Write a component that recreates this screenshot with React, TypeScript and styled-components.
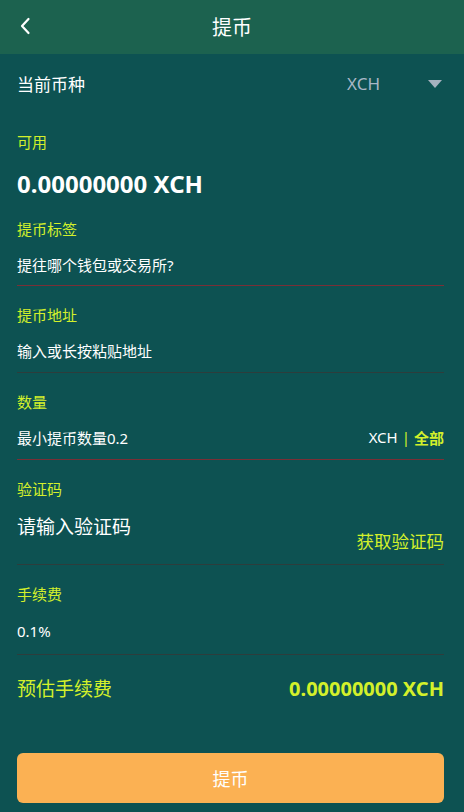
import React from "react";
import styled, { createGlobalStyle } from "styled-components";

const GlobalStyle = createGlobalStyle`
  html, body {
    margin: 0;
    padding: 0;
    background: #0d5252;
  }
  * {
    box-sizing: border-box;
  }
  body {
    font-family: "Noto Sans", "Noto Sans CJK SC", sans-serif;
  }
`;

const Page = styled.div`
  width: 100%;
  min-height: 812px;
  background: #0d5252;
  color: #ffffff;
`;

const Header = styled.header`
  position: relative;
  height: 54px;
  background: #1c624f;
  display: flex;
  align-items: center;
  justify-content: center;
`;

const BackButton = styled.button`
  position: absolute;
  left: 12px;
  top: 12px;
  width: 26px;
  height: 28px;
  padding: 0;
  border: none;
  background: none;
  display: flex;
  align-items: center;
  justify-content: center;
`;

const Title = styled.h1`
  margin: 0 0 2px;
  font-size: 20px;
  font-weight: 400;
  color: #ffffff;
`;

const Body = styled.main`
  padding: 0 20px 0 17px;
`;

const CoinRow = styled.div`
  height: 59px;
  display: flex;
  align-items: center;
  justify-content: space-between;
  font-size: 17px;
`;

const CoinPicker = styled.div`
  display: flex;
  align-items: center;
  gap: 48px;
  color: #a9b7c6;
  font-size: 17px;
`;

const Triangle = styled.span`
  width: 0;
  height: 0;
  border-left: 7px solid transparent;
  border-right: 7px solid transparent;
  border-top: 8px solid #a6b2bf;
  margin-right: 2px;
`;

const Field = styled.section<{ $line?: "red" | "dark" }>`
  padding-top: 15px;
  border-bottom: ${(p) =>
    p.$line === "red"
      ? "1px solid #7a2f36"
      : p.$line === "dark"
      ? "1px solid #2d3d3c"
      : "none"};
`;

const Label = styled.div`
  height: 28px;
  line-height: 28px;
  font-size: 15px;
  color: #d3f02b;
`;

const Value = styled.div<{ $h?: number }>`
  height: ${(p) => p.$h ?? 43}px;
  display: flex;
  align-items: center;
  justify-content: space-between;
  font-size: 15px;
  color: #ffffff;
`;

const Amount = styled.div`
  margin-top: 12px;
  height: 32px;
  line-height: 32px;
  font-size: 24px;
  font-weight: 700;
`;

const Unit = styled.span`
  font-size: 15px;
  display: flex;
  gap: 4px;
`;

const Accent = styled.span<{ $bold?: boolean }>`
  color: #d3f02b;
  font-weight: ${(p) => (p.$bold ? 700 : 400)};
`;

const CodeRow = styled.div`
  height: 61px;
  display: flex;
  justify-content: space-between;
`;

const CodeInput = styled.span`
  line-height: 48px;
  font-size: 19px;
`;

const CodeButton = styled.span`
  align-self: flex-end;
  margin-bottom: 11px;
  line-height: 24px;
  font-size: 17.5px;
  color: #d3f02b;
`;

const EstimateRow = styled.div`
  height: 66px;
  display: flex;
  align-items: center;
  justify-content: space-between;
  color: #d3f02b;
  font-size: 19px;
`;

const EstimateValue = styled.span`
  font-weight: 700;
  font-size: 20px;
`;

const Submit = styled.button`
  display: block;
  width: 100%;
  height: 50px;
  margin-top: 32px;
  border: none;
  border-radius: 6px;
  background: #fbb153;
  color: #ffffff;
  font-family: inherit;
  font-size: 18px;
`;

export default function App() {
  return (
    <Page>
      <GlobalStyle />
      <Header>
        <BackButton aria-label="back">
          <svg width="14" height="20" viewBox="0 0 14 20">
            <path d="M10.5 3 L4 10 L10.5 17" fill="none" stroke="#ffffff" strokeWidth="2.2" strokeLinecap="round" strokeLinejoin="round" />
          </svg>
        </BackButton>
        <Title>提币</Title>
      </Header>
      <Body>
        <CoinRow>
          <span>当前币种</span>
          <CoinPicker>
            XCH
            <Triangle />
          </CoinPicker>
        </CoinRow>

        <Field>
          <Label>可用</Label>
          <Amount>0.00000000 XCH</Amount>
        </Field>

        <Field $line="red">
          <Label>提币标签</Label>
          <Value $h={42}>提往哪个钱包或交易所?</Value>
        </Field>

        <Field $line="dark">
          <Label>提币地址</Label>
          <Value>输入或长按粘贴地址</Value>
        </Field>

        <Field $line="red">
          <Label>数量</Label>
          <Value>
            <span>最小提币数量0.2</span>
            <Unit>
              XCH<Accent>|</Accent><Accent $bold>全部</Accent>
            </Unit>
          </Value>
        </Field>

        <Field $line="dark">
          <Label>验证码</Label>
          <CodeRow>
            <CodeInput>请输入验证码</CodeInput>
            <CodeButton>获取验证码</CodeButton>
          </CodeRow>
        </Field>

        <Field $line="dark">
          <Label>手续费</Label>
          <Value $h={46}>0.1%</Value>
        </Field>

        <EstimateRow>
          <span>预估手续费</span>
          <EstimateValue>0.00000000 XCH</EstimateValue>
        </EstimateRow>

        <Submit>提币</Submit>
      </Body>
    </Page>
  );
}
